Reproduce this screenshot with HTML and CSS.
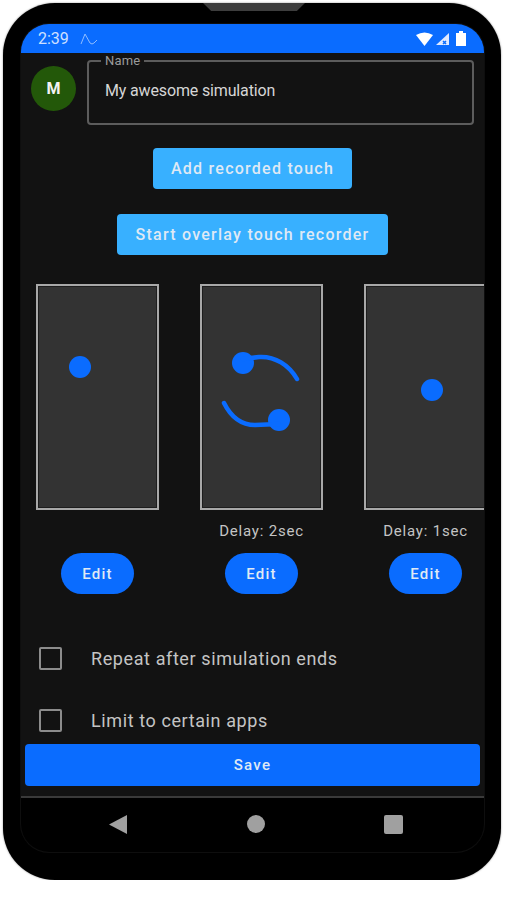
FILE: index.html
```html
<!DOCTYPE html>
<html lang="en">
<head>
    <meta charset="UTF-8">
    <meta name="viewport" content="width=device-width, initial-scale=1.0">
    <title>Touch Simulation</title>
    <link rel="stylesheet" href="styles.css">
</head>
<body>
    <div class="phone">
        <div class="notch"></div>
        <div class="screen">
            <header class="status-bar">
                <span class="status-time">2:39</span>
                <svg class="status-squiggle" width="18" height="14" viewBox="0 0 18 14">
                    <path d="M1 12 L5 2 L10 11 Q12 13 14 11 L17 8" fill="none" stroke="#8fbcff" stroke-width="1"/>
                </svg>
                <div class="status-icons">
                    <svg width="17" height="14" viewBox="0 0 17 14"><path d="M0 3 Q8.500 -2 17 3 L8.500 14 Z" fill="#fff"/></svg>
                    <svg class="status-signal" width="14" height="14" viewBox="0 0 14 14"><path d="M13 1 V13 H0 Z" fill="#dfe9ff"/><path d="M7 9 L10 12 M10 9 L7 12" stroke="#0a6cff" stroke-width="1.500"/></svg>
                    <svg width="10" height="15" viewBox="0 0 10 15"><path d="M3 0 H7 V2 H10 V15 H0 V2 H3 Z" fill="#fff"/></svg>
                </div>
            </header>

            <main class="content">
                <div class="name-row">
                    <div class="avatar">M</div>
                    <fieldset class="name-field">
                        <legend>Name</legend>
                        <span>My awesome simulation</span>
                    </fieldset>
                </div>

                <div class="actions">
                    <button class="btn-light btn-add">Add recorded touch</button>
                    <button class="btn-light">Start overlay touch recorder</button>
                </div>

                <div class="touch-strip">
                    <div class="touch-item">
                        <div class="touch-card">
                            <svg viewBox="0 0 119 222"><circle cx="42" cy="81" r="11" fill="#0a6cff"/></svg>
                        </div>
                        <p class="touch-delay"></p>
                        <button class="btn-edit">Edit</button>
                    </div>
                    <div class="touch-item">
                        <div class="touch-card">
                            <svg viewBox="0 0 119 222">
                                <circle cx="41" cy="77" r="11" fill="#0a6cff"/>
                                <circle cx="77" cy="134" r="11" fill="#0a6cff"/>
                                <path d="M41 73 L57 71 C73 70 87 79 95 93" fill="none" stroke="#0a6cff" stroke-width="4.500" stroke-linecap="round"/>
                                <path d="M22 117 C29 131 39 139 53 139 L77 138" fill="none" stroke="#0a6cff" stroke-width="4.500" stroke-linecap="round"/>
                            </svg>
                        </div>
                        <p class="touch-delay">Delay: 2sec</p>
                        <button class="btn-edit">Edit</button>
                    </div>
                    <div class="touch-item">
                        <div class="touch-card">
                            <svg viewBox="0 0 119 222"><circle cx="66" cy="104" r="11" fill="#0a6cff"/></svg>
                        </div>
                        <p class="touch-delay">Delay: 1sec</p>
                        <button class="btn-edit">Edit</button>
                    </div>
                </div>

                <div class="options">
                    <label class="option"><span class="checkbox"></span>Repeat after simulation ends</label>
                    <label class="option"><span class="checkbox"></span>Limit to certain apps</label>
                </div>
            </main>

            <div class="save-bar">
                <button class="btn-save">Save</button>
            </div>

            <nav class="nav-bar">
                <svg width="18" height="19" viewBox="0 0 18 19"><path d="M18 0 V19 L0 9.500 Z" fill="#a0a0a0"/></svg>
                <svg width="18" height="18" viewBox="0 0 18 18"><circle cx="9" cy="9" r="9" fill="#a0a0a0"/></svg>
                <svg width="19" height="19" viewBox="0 0 19 19"><rect width="19" height="19" rx="2" fill="#a0a0a0"/></svg>
            </nav>
        </div>
    </div>
</body>
</html>
```

FILE: styles.css
```css
:root {
    --primary-color: #0a6cff;
    --light-color: #38b0ff;
    --text-color: #c4c4c4;
    --surface-color: #121212;
}

body {
    font-family: Roboto, "Noto Sans", sans-serif;
    margin: 0;
    background: #fff;
}

button {
    font-family: inherit;
    border: none;
    color: #dfe9f5;
    font-weight: 500;
    letter-spacing: 1.25px;
}

.phone {
    position: relative;
    box-sizing: border-box;
    width: 498px;
    height: 877px;
    margin: 3px 0 0 3px;
    padding: 21px 17px 28px 18px;
    background: #000;
    border-radius: 52px;
    box-shadow: 0 0 2px #8a8a8a;
}

.notch {
    position: absolute;
    top: 0;
    left: 200px;
    width: 102px;
    height: 8px;
    background: #3d3d3d;
    clip-path: polygon(0 0, 100% 0, 92% 100%, 8% 100%);
}

.screen {
    height: 100%;
    display: flex;
    flex-direction: column;
    background: var(--surface-color);
    border-radius: 28px;
    overflow: hidden;
    box-shadow: 0 0 0 1px #0e0e0e;
}

.status-bar {
    flex: none;
    height: 29px;
    display: flex;
    align-items: center;
    padding: 0 18px 0 17px;
    background: var(--primary-color);
    color: #cfe0ff;
    font-size: 16px;
}

.status-squiggle {
    margin-left: 11px;
}

.status-icons {
    margin-left: auto;
    display: flex;
    align-items: center;
    gap: 3px;
}

.status-signal {
    margin-right: 3px;
}

.content {
    flex: 1;
    min-height: 0;
    overflow: hidden;
}

.name-row {
    display: flex;
    gap: 11px;
    padding: 0 10px;
}

.avatar {
    flex: none;
    width: 45px;
    height: 45px;
    margin-top: 13px;
    display: flex;
    align-items: center;
    justify-content: center;
    background: #235809;
    border-radius: 50%;
    color: #f2f2f2;
    font-size: 16px;
    font-weight: 700;
}

.name-field {
    flex: 1;
    box-sizing: border-box;
    height: 72px;
    margin: 0;
    padding: 13px 16px 0;
    border: 2px solid #5c5c5c;
    border-radius: 4px;
    color: #d6d6d6;
    font-size: 16px;
    letter-spacing: -0.150px;
}

.name-field legend {
    padding: 0 4px;
    margin-left: -4px;
    color: #9a9a9a;
    font-size: 13px;
    line-height: 15px;
    letter-spacing: 0.200px;
}

.actions {
    margin-top: 23px;
    display: flex;
    flex-direction: column;
    align-items: center;
    gap: 25px;
}

.btn-light {
    height: 41px;
    padding: 0 18px;
    background: var(--light-color);
    border-radius: 4px;
    font-size: 16px;
}

.touch-strip {
    margin-top: 29px;
    padding-left: 15px;
    display: flex;
    gap: 41px;
}

.touch-item {
    flex: none;
    width: 123px;
    display: flex;
    flex-direction: column;
    align-items: center;
}

.touch-card {
    box-sizing: border-box;
    width: 123px;
    height: 226px;
    background: #333;
    border: 2px solid #a8a8a8;
    box-shadow: inset 0 0 0 1px #1d1d1d;
}

.touch-card svg {
    display: block;
    width: 100%;
    height: 100%;
}

.touch-delay {
    height: 20px;
    margin: 11px 0 12px;
    color: var(--text-color);
    font-size: 15px;
    line-height: 20px;
    letter-spacing: 0.800px;
}

.btn-edit {
    width: 73px;
    height: 41px;
    background: var(--primary-color);
    border-radius: 21px;
    font-size: 15px;
}

.options {
    margin-top: 53px;
    padding-left: 18px;
    display: flex;
    flex-direction: column;
    gap: 39px;
}

.option {
    display: flex;
    align-items: center;
    gap: 29px;
    height: 23px;
    color: var(--text-color);
    font-size: 18px;
    letter-spacing: 0.600px;
}

.checkbox {
    flex: none;
    box-sizing: border-box;
    width: 23px;
    height: 23px;
    border: 2px solid #8c8c8c;
    border-radius: 2px;
}

.save-bar {
    flex: none;
    padding: 0 4px 10px;
    background: var(--surface-color);
}

.btn-save {
    display: block;
    width: 100%;
    height: 42px;
    background: var(--primary-color);
    border-radius: 4px;
    font-size: 15px;
}

.nav-bar {
    flex: none;
    height: 56px;
    box-sizing: border-box;
    padding: 0 81px 2px 88px;
    display: flex;
    align-items: center;
    justify-content: space-between;
    background: #000;
    border-top: 2px solid #3a3a3a;
}
```
